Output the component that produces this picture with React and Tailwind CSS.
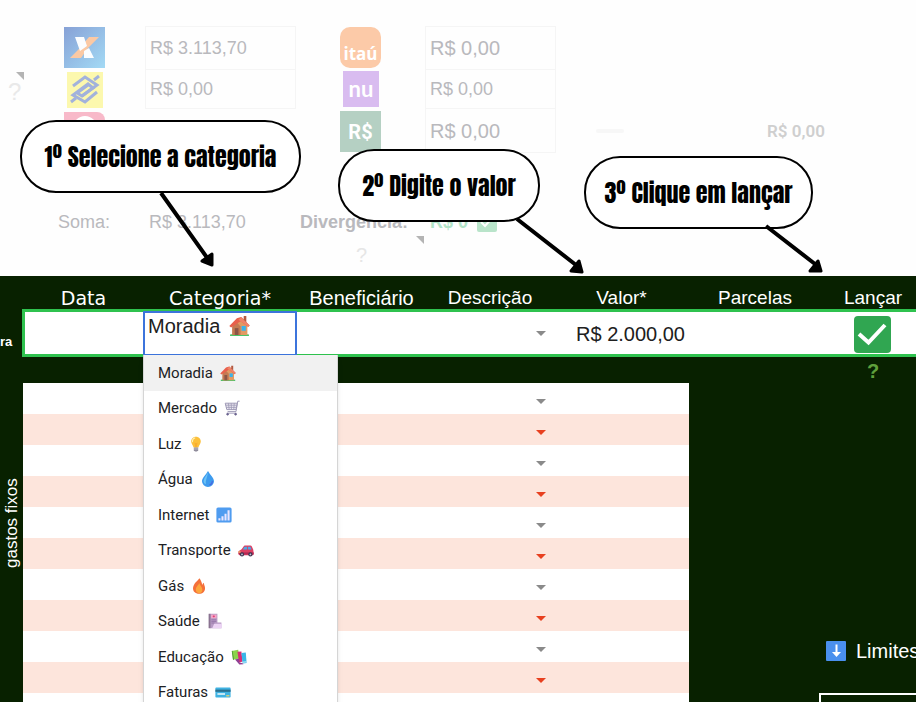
import React, { useState } from "react";

const categories = [
  { label: "Moradia", icon: "house" },
  { label: "Mercado", icon: "cart" },
  { label: "Luz", icon: "bulb" },
  { label: "Água", icon: "drop" },
  { label: "Internet", icon: "signal" },
  { label: "Transporte", icon: "car" },
  { label: "Gás", icon: "fire" },
  { label: "Saúde", icon: "health" },
  { label: "Educação", icon: "books" },
  { label: "Faturas", icon: "card" },
];

const rows = Array.from({ length: 11 }, (_, i) => i);

const icons = {
  house: (
    <>
      <path d="M1 18.500c3-1 15-1 18 0V20H1z" fill="#4cc46a" />
      <path d="M3.500 10 10 5l7.500 4V19h-14z" fill="#e39a63" />
      <path d="M3 11 7 6.500l4 4.500v8H3z" fill="#c47a52" />
      <path d="M.3 10.500 7.500 3l4-1 8.300 8-1.500 1.500L11 6 2 12z" fill="#e8604c" />
      <path d="M9 4.500 12 2l7.500 8-1.500 1z" fill="#f08468" />
      <path d="M14 1h2.500v6L14 4.500z" fill="#b35a41" />
      <path d="M5.500 12.500H9V19H5.500z" fill="#8a5546" />
      <path d="M12 10.500h4v4.500h-4z" fill="#3bb3ea" />
    </>
  ),
  cart: (
    <g fill="none" stroke="#9d98b5" strokeWidth="1.200">
      <path d="M19.500 1.500h-2.300L15 14.500H4.500" />
      <path d="M1.500 4h15l-1.500 8H3.500z" fill="#ebe9f1" />
      <path d="M2 6.500h14M2.700 9.200h13M5.500 4l1 8M9 4l.3 8M12.800 4l-.6 8" strokeWidth="1" />
      <path d="M3.500 16.500h12" stroke="#a49fbd" />
      <circle cx="4.500" cy="17.800" r="1.100" fill="#6c6490" stroke="#6c6490" />
      <circle cx="14.500" cy="17.800" r="1.100" fill="#6c6490" stroke="#6c6490" />
    </g>
  ),
  bulb: (
    <>
      <path d="M10 .8c-3.600 0-6 2.700-6 6 0 3 2.400 4.300 3 7.700h6c.6-3.400 3-4.700 3-7.700 0-3.300-2.400-6-6-6z" fill="#fcc03a" />
      <path d="M8.500 2.500C6.500 3 5.500 4.800 5.600 7" fill="none" stroke="#fff0b5" strokeWidth="1.400" strokeLinecap="round" />
      <path d="m8 8 1.200 6h1.600L12 8l-2 1z" fill="#f9ad2e" />
      <path d="M7.300 14.500h5.400v3.300l-1.500 1.700H8.800l-1.500-1.700z" fill="#8f8c9b" />
      <path d="M7.300 16.200h5.400" stroke="#c9c7d1" />
    </>
  ),
  drop: (
    <>
      <path d="M10 0C7.500 4.500 2.500 8.500 2.500 12.800a7.500 7.200 0 0 0 15 0C17.500 8.500 12.500 4.500 10 0z" fill="#3d9bee" />
      <path d="M10 1.500C8.500 5.500 4.500 9 4.500 12.500c0 2 1.200 3.500 2.700 4C6.500 12 9.500 7 10 1.500z" fill="#6cc4f7" />
      <path d="M15.300 13c0 2-1.300 3.800-3 4.300" fill="none" stroke="#4b66e0" strokeWidth="1.500" strokeLinecap="round" />
    </>
  ),
  signal: (
    <>
      <rect x=".5" y=".5" width="19" height="19" rx="2" fill="#4f9cf0" />
      <path d="M3 14h2.600v3H3zM6.800 11.500h2.600V17H6.800zM10.600 8.500h2.600V17h-2.600zM14.400 4H17v13h-2.600z" fill="#eae6ff" />
    </>
  ),
  car: (
    <>
      <path d="M.5 11.500 4.500 9 7 5.500C7.500 4.700 8 4.500 9 4.500h6.500c.9 0 1.400.3 1.800 1.100L19 9.500l.8 5.500-1 1.500H1.800L.4 15z" fill="#dc3f62" />
      <path d="M6 9.300 8.200 6h3v3.300zM12.300 6h3.200l1.500 3.300h-4.700z" fill="#4aa9e6" />
      <path d="M1 13h18.500v2.500H1z" fill="#b12a55" />
      <circle cx="5" cy="15.500" r="2.600" fill="#3b3552" />
      <circle cx="15.500" cy="15.500" r="2.600" fill="#3b3552" />
      <circle cx="5" cy="15.500" r="1.100" fill="#c8c4d4" />
      <circle cx="15.500" cy="15.500" r="1.100" fill="#c8c4d4" />
      <path d="M.8 11.800h2.400v1.500H.8z" fill="#fbd45c" />
    </>
  ),
  fire: (
    <>
      <path d="M10.500.3C9 3 3.500 6 2.600 12c-.7 4.800 2.900 7.800 7.400 7.800s8-3 7.500-7.600c-.3-2.700-1.300-3.700-1.500-6.200-1 .6-1.800 1.500-2 2.600C13.500 5.500 12.500 3 10.500.3z" fill="#f4703a" />
      <path d="M10 6c.3 3-4 4.500-4 8.500 0 2.800 1.800 4.500 4 4.500 2.600 0 4.200-1.800 4.200-4.300C14.200 11.500 11.500 10 10 6z" fill="#fca63c" />
    </>
  ),
  health: (
    <>
      <path d="M3 1h10v11h5v7H3z" fill="#b79ac4" />
      <path d="M5 2h7v4.500H5z" fill="#f3a6c6" />
      <path d="M5.500 8.500h6M5.500 10.500h6M5.500 12.500h4" stroke="#8f6fa3" />
      <path d="M9 13.500h9.500V19H6.500z" fill="#ecd3f4" />
      <path d="M2 1h2.300v18H2z" fill="#8a7391" />
      <path d="M8.500 3v2.500M7.200 4.200h2.600" stroke="#e0306e" />
    </>
  ),
  books: (
    <>
      <path d="m1 2.500 8-1.500 1.500 11-8 1.500z" fill="#8bd44a" />
      <path d="m1 2.500 1-.3 1.800 11.100-1.300.2z" fill="#4f9a36" />
      <path d="m8 3.500 5-.5 1.500 13-5 .5-2-3 2-.7z" fill="#d82e74" />
      <path d="m13 5 5.500-.5 1 13-5 .5z" fill="#39b6e8" />
      <path d="m5 13 5-1 .5 4.500L15 18l.5 1-5 .3z" fill="#8f3f94" />
      <path d="m14.300 16.500 4.800-.4" stroke="#fff" />
    </>
  ),
  card: (
    <>
      <rect x=".5" y="4.500" width="19" height="12.500" rx="1" fill="#3fb2e2" />
      <path d="M.5 7h19v2.800H.5z" fill="#2a6f8e" />
      <path d="M3 11.500h9.500v2H3z" fill="#e5f4fa" />
      <path d="M14 14h4v1.500h-4z" fill="#f5d565" />
    </>
  ),
};

function Emoji({ name, className }) {
  return (
    <svg viewBox="0 0 20 20" className={className} aria-hidden="true">
      {icons[name]}
    </svg>
  );
}

function Caret({ className }) {
  return (
    <svg viewBox="0 0 10 5" className={className} aria-hidden="true">
      <path d="M0 0h10L5 5z" fill="currentColor" />
    </svg>
  );
}

function NoteCorner({ className }) {
  return (
    <svg viewBox="0 0 8 8" className={className} aria-hidden="true">
      <path d="M0 0h8v8z" fill="#b4b4b4" />
    </svg>
  );
}

function CaixaLogo() {
  return (
    <svg viewBox="0 0 41 41" className="mt-px size-[41px]" aria-label="Caixa">
      <defs>
        <linearGradient id="caixa" x1="0" y1="0" x2="1" y2="1">
          <stop offset="0" stopColor="#87a1d6" />
          <stop offset="1" stopColor="#a3daf5" />
        </linearGradient>
      </defs>
      <path d="M0 0h41v41H0z" fill="url(#caixa)" />
      <path d="M25 10h10L24 21l-7 10H6l8-8z" fill="#fbc9a4" />
      <path d="M11 10h9l3 9-7 5zM20 24l5-3 5 10h-10z" fill="#fbfdff" />
    </svg>
  );
}

function BbLogo() {
  return (
    <svg viewBox="0 0 36 36" className="ml-[3px] mt-[2px] size-9" aria-label="Banco do Brasil">
      <path d="M0 0h36v36H0z" fill="#fcf8ae" />
      <g fill="none" stroke="#a2b2dc" strokeWidth="3">
        <path d="M6 14 18 5l12 8-15 11-5-3 11-8" />
        <path d="M30 20 18 30 6 23 21 12l5 4-11 8" />
        <path d="m27 8 5-4M4 30l5-4" />
      </g>
    </svg>
  );
}

function Balance({ id, label, value, className }) {
  return (
    <input
      id={id}
      aria-label={label}
      defaultValue={value}
      className={`w-full min-w-0 border-[#f5f5f5] px-1 text-[#b9b9bd] outline-none ${className}`}
    />
  );
}

function Callout({ children, className }) {
  return (
    <div
      className={`absolute z-20 flex h-[73px] items-center justify-center rounded-[36px] border-2 border-black bg-white font-['Anton','Impact','Liberation_Sans_Narrow','Roboto_Condensed',sans-serif] text-[24px] font-normal whitespace-nowrap text-black ${className}`}
    >
      {children}
    </div>
  );
}

function Arrows() {
  return (
    <svg
      viewBox="0 0 916 276"
      className="absolute top-0 left-0 z-30 h-[276px] w-[916px]"
      fill="#000"
      stroke="#000"
      strokeLinejoin="round"
      aria-hidden="true"
    >
      <path d="M161 193 208 259M517 219l59 46M766 226l49 38" strokeWidth="4" />
      <path
        d="M212 254v11l-10-4zM579 261l3 11-11-1zM818 261l3 10-11 0z"
        strokeWidth="3"
      />
    </svg>
  );
}

function Accounts() {
  return (
    <section className="relative h-[276px] shrink-0 pt-[26px] text-[18px] text-[#b9b9bd]">
      <div className="grid grid-cols-[64px_81px_151px_44px_85px_131px_1fr] grid-rows-[44px_39px_44px]">
        <div className="row-span-3 flex flex-col pt-[46px] pl-2">
          <NoteCorner className="ml-2 size-2" />
          <span className="text-[24px] leading-6 text-[#e9e9e9]">?</span>
        </div>
        <CaixaLogo />
        <Balance
          id="caixa-saldo"
          label="Saldo Caixa"
          value="R$ 3.113,70"
          className="border text-[18px]"
        />
        <span />
        <div className="mt-px flex size-[41px] items-end justify-center rounded-[10px] bg-[#fccaa8] pb-1 font-['Open_Sans',sans-serif] text-[17px] leading-5 font-bold text-white">
          itaú
        </div>
        <Balance
          id="itau-saldo"
          label="Saldo Itaú"
          value="R$ 0,00"
          className="border text-[20px]"
        />
        <span />

        <BbLogo />
        <Balance
          id="bb-saldo"
          label="Saldo Banco do Brasil"
          value="R$ 0,00"
          className="border-x border-b text-[18px]"
        />
        <span />
        <div className="mt-px ml-[3px] flex size-9 items-center justify-center bg-[#d9bcf0] font-['Lato',sans-serif] text-[22px] leading-6 font-bold text-white">
          nu
        </div>
        <Balance
          id="nu-saldo"
          label="Saldo Nubank"
          value="R$ 0,00"
          className="border-x border-b text-[18px]"
        />
        <span />

        <div className="mt-[3px] flex size-[41px] justify-center rounded-tr-lg bg-[#f8b9c9]">
          <span className="mt-1 size-6 rounded-full border-4 border-white" />
        </div>
        <span />
        <span />
        <div className="mt-[2px] flex size-[41px] items-center justify-center bg-[#b5d0c3] font-['Roboto',sans-serif] text-[20px] font-bold text-white">
          R$
        </div>
        <Balance
          id="dinheiro-saldo"
          label="Saldo em dinheiro"
          value="R$ 0,00"
          className="border-x border-b text-[20px]"
        />
        <div className="flex items-center pl-10">
          <span className="h-1 w-7 rounded-full bg-[#f7f7f7]" />
          <span className="ml-[143px] font-['Roboto',sans-serif] text-[17px] leading-6 font-semibold text-[#cfcfcf]">
            R$ 0,00
          </span>
        </div>
      </div>

      <div className="mt-[57px] grid grid-cols-[58px_91px_151px_130px_47px_1fr] items-center leading-6">
        <span />
        <span>Soma:</span>
        <span>R$ 3.113,70</span>
        <span className="font-bold">Divergência:</span>
        <span className="font-bold text-[#b2e4c8]">R$ 0</span>
        <svg viewBox="0 0 20 20" className="size-5" aria-hidden="true">
          <rect width="20" height="20" rx="2" fill="#b9e4ca" />
          <path d="m4 10 4 4 8-9" fill="none" stroke="#fff" strokeWidth="2" />
        </svg>
      </div>
      <div className="flex pt-[2px] pl-[356px] text-[20px] text-[#e6e6e6]">
        <span className="mt-1">?</span>
        <NoteCorner className="ml-[49px] size-2" />
      </div>

      <Callout className="top-[120px] left-[20px] w-[281px]">1º Selecione a categoria</Callout>
      <Callout className="top-[149px] left-[338px] w-[202px]">2º Digite o valor</Callout>
      <Callout className="top-[156px] left-[584px] w-[229px]">3º Clique em lançar</Callout>
      <Arrows />
    </section>
  );
}

export default function App() {
  const [selected, setSelected] = useState(categories[0]);
  const [open, setOpen] = useState(true);

  const choose = (category) => {
    setSelected(category);
    setOpen(false);
  };

  return (
    <div className="flex h-screen w-full flex-col overflow-hidden bg-[#fefefe] font-['Liberation_Sans',Arial,sans-serif]">
      <Accounts />

      <main className="flex-1 bg-[#082100] text-white">
        <form onSubmit={(e) => e.preventDefault()}>
          <div className="grid h-[33px] grid-cols-[23px_121px_152px_131px_126px_137px_130px_minmax(106px,1fr)] items-end text-center text-[19px] leading-[22px]">
            <span />
            <label htmlFor="data" className="font-['DejaVu_Sans',sans-serif]">
              Data
            </label>
            <span id="categoria-label" className="font-['DejaVu_Sans',sans-serif]">
              Categoria*
            </span>
            <label htmlFor="beneficiario" className="text-[20px]">
              Beneficiário
            </label>
            <label htmlFor="descricao">Descrição</label>
            <label htmlFor="valor">Valor*</label>
            <label htmlFor="parcelas">Parcelas</label>
            <span>Lançar</span>
          </div>

          <div className="flex">
            <div className="flex w-[22px] shrink-0 items-center pt-[18px] text-[13px] font-bold">
              ra
            </div>
            <div className="grid h-12 flex-1 grid-cols-[118px_154px_128px_127px_137px_130px_minmax(106px,1fr)] border-y-[3px] border-l-[3px] border-[#2fc24f] bg-white text-[20px] text-[#202020]">
              <input id="data" className="min-w-0 px-1 outline-none" />
              <div className="relative">
                <button
                  type="button"
                  aria-haspopup="listbox"
                  aria-expanded={open}
                  aria-labelledby="categoria-label categoria-valor"
                  onClick={() => setOpen(!open)}
                  className="relative -mt-px flex h-[45px] w-full items-start gap-[9px] border-2 border-[#3c74dc] bg-white pt-px pl-[3px] leading-6"
                >
                  <span id="categoria-valor">{selected.label}</span>
                  <Emoji name={selected.icon} className="mt-px size-[21px]" />
                </button>

                {open && (
                  <ul
                    role="listbox"
                    aria-labelledby="categoria-label"
                    className="absolute top-[43px] left-0 z-10 grid h-[356px] w-[195px] grid-rows-10 border border-t-0 border-[#d5d5d5] bg-white font-['Roboto',sans-serif] text-[15px] text-[#202124] shadow-md"
                  >
                    {categories.map((category) => (
                      <li
                        key={category.label}
                        role="option"
                        aria-selected={category === selected}
                        className={category === selected ? "flex bg-[#f1f1f1]" : "flex"}
                      >
                        <button
                          type="button"
                          onClick={() => choose(category)}
                          className="flex flex-1 items-center gap-[7px] pl-[14px]"
                        >
                          {category.label}
                          <Emoji name={category.icon} className="size-4" />
                        </button>
                      </li>
                    ))}
                  </ul>
                )}
              </div>
              <input id="beneficiario" className="min-w-0 px-1 outline-none" />
              <div className="relative flex">
                <select id="descricao" className="w-full appearance-none outline-none">
                  <option></option>
                </select>
                <Caret className="pointer-events-none absolute top-[19px] right-[6px] h-[5px] w-[10px] text-[#8a8a8a]" />
              </div>
              <input
                id="valor"
                defaultValue="R$ 2.000,00"
                className="min-w-0 pr-1 text-right outline-none"
              />
              <input id="parcelas" className="min-w-0 px-1 outline-none" />
              <div className="flex items-center justify-center">
                <button
                  type="submit"
                  aria-label="Lançar"
                  className="size-[37px] rounded-sm bg-[#30a651]"
                >
                  <svg viewBox="0 0 37 37" fill="none" aria-hidden="true">
                    <path d="m5 18 9.500 8.500L31 9" stroke="#fff" strokeWidth="4" />
                  </svg>
                </button>
              </div>
            </div>
          </div>
        </form>

        <div className="flex items-start">
          <div className="flex w-[23px] shrink-0 justify-center pt-[121px]">
            <span className="h-[90px] rotate-180 text-center text-[17px] leading-5 whitespace-nowrap [writing-mode:vertical-rl]">
              gastos fixos
            </span>
          </div>

          <table
            aria-label="gastos fixos"
            className="mt-[26px] w-[666px] shrink-0 table-fixed border-collapse"
          >
            <tbody>
              {rows.map((i) => (
                <tr key={i} className="h-[31px] bg-white even:bg-[#fde5dc]">
                  <td className="w-[121px]" />
                  <td className="w-[152px]" />
                  <td className="w-[131px]" />
                  <td className="w-[126px] p-0">
                    <div className="relative flex">
                      <select
                        aria-label={`Descrição ${i + 1}`}
                        className="h-[31px] w-full appearance-none outline-none"
                      >
                        <option></option>
                      </select>
                      <Caret
                        className={`pointer-events-none absolute top-4 right-[7px] h-[5px] w-[10px] ${
                          i % 2 ? "text-[#e8401f]" : "text-[#8a8a8a]"
                        }`}
                      />
                    </div>
                  </td>
                  <td />
                </tr>
              ))}
            </tbody>
          </table>

          <aside className="min-w-0 flex-1">
            <div className="h-7 pl-[178px] text-[20px] leading-7 font-bold text-[#5fa03c]">?</div>
            <div className="mt-64 flex h-5 items-center gap-[10px] pl-[137px] text-[20px] whitespace-nowrap">
              <svg viewBox="0 0 20 20" className="size-5 shrink-0" fill="none" aria-hidden="true">
                <rect width="20" height="20" rx="1" fill="#4a90ee" />
                <path d="M10.500 3.500v9" stroke="#fff" strokeWidth="2" />
                <path d="M6 11h9l-4.500 5z" fill="#fff" />
              </svg>
              Limites
            </div>
            <div className="mt-8 ml-[130px] h-10 border-2 border-r-0 border-white" />
          </aside>
        </div>
      </main>
    </div>
  );
}
